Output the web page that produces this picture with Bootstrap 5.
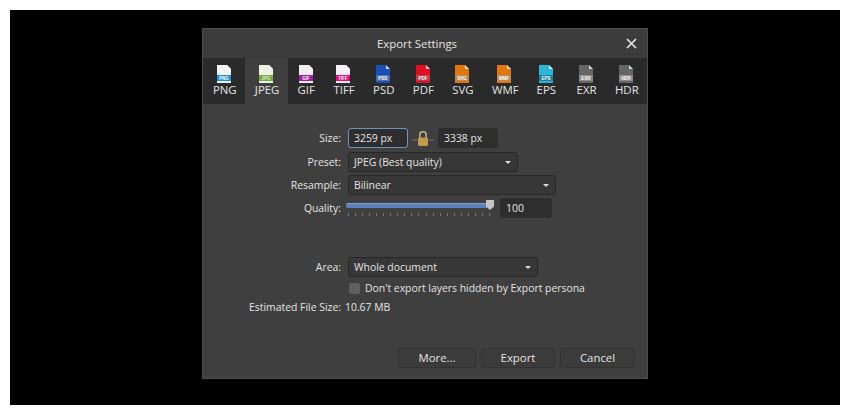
<!DOCTYPE html>
<html lang="en">
<head>
  <meta charset="UTF-8">
  <meta name="viewport" content="width=device-width, initial-scale=1.0">
  <title>Export Settings</title>
  <link href="https://cdn.jsdelivr.net/npm/bootstrap@5.3.0/dist/css/bootstrap.min.css" rel="stylesheet">
  <style>
    html, body { height: 100%; }
    body {
      background-color: #fff;
      padding: 10px;
      font-family: "Open Sans", "Liberation Sans", sans-serif;
      font-size: 10.4px;
      line-height: 1;
      color: #e4e4e4;
    }
    .backdrop {
      width: 830px;
      height: 395px;
      background-color: #000;
      padding: 18px 0 0 192px;
    }
    .export-dialog {
      width: 446px;
      height: 351px;
      background-color: #3f3f3f;
      border: 1px solid #4c4c4c;
    }
    .title-bar {
      height: 29px;
      padding-right: 16px;
      font-size: 11.4px;
      background-color: #3c3c3c;
    }
    .close-x { position: absolute; right: 10px; top: 9px; }
    .format-tabs { height: 46px; background-color: #2a2a2a; }
    .format-tab {
      padding: 7px 9.9px 0;
      min-width: 30px;
      font-size: 11.4px;
    }
    .format-tab svg { display: block; margin: 0 auto 1px; }
    .format-tab.active-tab { background-color: #3f3f3f; }
    .format-tab.gap-before { margin-left: 2px; }
    .doc-label { font-size: 4.5px; font-weight: 700; font-family: "Liberation Sans", sans-serif; }
    .settings-form { padding: 22px 0 0; }
    .field-row { height: 23px; }
    .first-row { margin-bottom: 1px; }
    .field-label { width: 145px; text-align: right; padding: 2px 7px 0 0; flex-shrink: 0; }
    .ui-field {
      height: 20px;
      padding: 2px 5px 0;
      background-color: #373737;
      border: 1px solid #282828;
      border-radius: 3px;
    }
    .ui-field.focused { border-color: #6d93bd; background-color: #2e2e2e; }
    .ui-field.dark { background-color: #2e2e2e; border-color: #2e2e2e; }
    .w-size { width: 60px; }
    .w-preset { width: 170px; }
    .w-resample { width: 208px; }
    .w-area { width: 190px; }
    .w-number { width: 52px; }
    .caret-down {
      width: 0;
      height: 0;
      border-left: 3.5px solid transparent;
      border-right: 3.5px solid transparent;
      border-top: 3.5px solid #ddd;
      margin-right: 1px;
    }
    .lock-box { width: 30px; }
    .q-slider { position: relative; width: 148px; height: 20px; margin-left: -2px; margin-right: 6px; }
    .q-track {
      position: absolute;
      left: 0;
      top: 5px;
      width: 144px;
      height: 5px;
      background-color: #5b82bf;
      border-radius: 2px;
      border-top: 1px solid #7f9dca;
    }
    .q-thumb { position: absolute; left: 140px; top: 2px; }
    .q-ticks { position: absolute; left: 2px; right: 4px; top: 15px; }
    .q-ticks i { display: block; width: 1px; height: 3px; background-color: #777; }
    .area-row { margin-top: 36px; }
    .check-row { margin-top: 1px; height: 18px; padding-left: 146px; }
    .ui-check {
      width: 11px;
      height: 11px;
      margin-right: 5px;
      background-color: #5f5f5f;
      border-radius: 2px;
    }
    .size-row { height: 18px; margin-top: 1px; }
    .size-row .field-label { width: 142px; padding: 0 4px 0 0; }
    .dialog-actions { padding: 0 12px 0 0; margin-top: 32px; gap: 5px; }
    .ui-btn {
      height: 20px;
      font-size: 11.4px;
      color: #e4e4e4;
      background-color: #3b3b3b;
      border: 1px solid #333;
      border-radius: 3px;
    }
    .w-more { width: 78px; }
    .w-export { width: 74px; }
    .w-cancel { width: 75px; }
  </style>
</head>
<body>

  <svg width="0" height="0" class="position-absolute">
    <symbol id="doc" viewBox="0 0 14 18">
      <path d="M0 0H10L14 4V18H0Z" fill="currentColor"/>
      <path d="M10 0L14 4H10Z" fill="#fff" opacity=".75"/>
    </symbol>
  </svg>

  <div class="backdrop">
    <div class="export-dialog d-flex flex-column">

      <!-- Title -->
      <div class="title-bar position-relative d-flex align-items-center justify-content-center">
        Export Settings
        <svg class="close-x" width="11" height="11" viewBox="0 0 11 11"><path d="M1 1L10 10M10 1L1 10" stroke="#e8e8e8" stroke-width="1.6"/></svg>
      </div>

      <!-- Format tabs -->
      <div class="format-tabs d-flex">
        <div class="format-tab text-center">
          <svg width="14" height="18" viewBox="0 0 14 18" style="color:#f2f4f8"><use href="#doc"/><rect y="10" width="14" height="6" fill="#1c8fd8"/><text class="doc-label" x="7" y="15" text-anchor="middle" fill="#fff">PNG</text></svg>
          PNG
        </div>
        <div class="format-tab active-tab text-center">
          <svg width="14" height="18" viewBox="0 0 14 18" style="color:#eef2e6"><use href="#doc"/><rect y="10" width="14" height="6" fill="#76a83a"/><text class="doc-label" x="7" y="15" text-anchor="middle" fill="#dfeccb">JPG</text></svg>
          JPEG
        </div>
        <div class="format-tab text-center">
          <svg width="14" height="18" viewBox="0 0 14 18" style="color:#f3eef3"><use href="#doc"/><rect y="10" width="14" height="6" fill="#a51c9e"/><text class="doc-label" x="7" y="15" text-anchor="middle" fill="#fff">GIF</text></svg>
          GIF
        </div>
        <div class="format-tab text-center">
          <svg width="14" height="18" viewBox="0 0 14 18" style="color:#f6eef2"><use href="#doc"/><rect y="10" width="14" height="6" fill="#e0107a"/><text class="doc-label" x="7" y="15" text-anchor="middle" fill="#fff">TIFF</text></svg>
          TIFF
        </div>
        <div class="format-tab text-center">
          <svg width="14" height="18" viewBox="0 0 14 18" style="color:#1c4fb4"><use href="#doc"/><rect y="10" width="14" height="6" fill="#4b6fae"/><text class="doc-label" x="7" y="15" text-anchor="middle" fill="#fff">PSD</text></svg>
          PSD
        </div>
        <div class="format-tab text-center">
          <svg width="14" height="18" viewBox="0 0 14 18" style="color:#dc0f25"><use href="#doc"/><rect y="10" width="14" height="6" fill="#b3404c"/><text class="doc-label" x="7" y="15" text-anchor="middle" fill="#fff">PDF</text></svg>
          PDF
        </div>
        <div class="format-tab text-center">
          <svg width="14" height="18" viewBox="0 0 14 18" style="color:#e2760f"><use href="#doc"/><rect y="10" width="14" height="6" fill="#b98a55"/><text class="doc-label" x="7" y="15" text-anchor="middle" fill="#fff">SVG</text></svg>
          SVG
        </div>
        <div class="format-tab text-center">
          <svg width="14" height="18" viewBox="0 0 14 18" style="color:#e2760f"><use href="#doc"/><rect y="10" width="14" height="6" fill="#b98a55"/><text class="doc-label" x="7" y="15" text-anchor="middle" fill="#fff">WMF</text></svg>
          WMF
        </div>
        <div class="format-tab text-center">
          <svg width="14" height="18" viewBox="0 0 14 18" style="color:#2bb6d6"><use href="#doc"/><rect y="10" width="14" height="6" fill="#1b7f9c"/><text class="doc-label" x="7" y="15" text-anchor="middle" fill="#fff">EPS</text></svg>
          EPS
        </div>
        <div class="format-tab gap-before text-center">
          <svg width="14" height="18" viewBox="0 0 14 18" style="color:#666"><use href="#doc"/><rect y="10" width="14" height="6" fill="#8c8c8c"/><text class="doc-label" x="7" y="15" text-anchor="middle" fill="#fff">EXR</text></svg>
          EXR
        </div>
        <div class="format-tab text-center">
          <svg width="14" height="18" viewBox="0 0 14 18" style="color:#666"><use href="#doc"/><rect y="10" width="14" height="6" fill="#8c8c8c"/><text class="doc-label" x="7" y="15" text-anchor="middle" fill="#fff">HDR</text></svg>
          HDR
        </div>
      </div>

      <!-- Settings -->
      <div class="settings-form">
        <div class="field-row first-row d-flex align-items-center">
          <div class="field-label">Size:</div>
          <div class="ui-field focused w-size d-flex align-items-center">3259 px</div>
          <div class="lock-box d-flex justify-content-center">
            <svg width="22" height="16" viewBox="0 0 22 16">
              <path d="M0 10H5M17 10H22" stroke="#777"/>
              <path d="M7.8 8V5a3.2 3.2 0 0 1 6.4 0V8" fill="none" stroke="#c8b88a" stroke-width="1.5"/>
              <rect x="6" y="7.5" width="10" height="8.5" rx="1.5" fill="#c49a52"/>
            </svg>
          </div>
          <div class="ui-field dark w-size d-flex align-items-center">3338 px</div>
        </div>
        <div class="field-row d-flex align-items-center">
          <div class="field-label">Preset:</div>
          <div class="ui-field w-preset d-flex align-items-center justify-content-between">JPEG (Best quality)<span class="caret-down"></span></div>
        </div>
        <div class="field-row d-flex align-items-center">
          <div class="field-label">Resample:</div>
          <div class="ui-field w-resample d-flex align-items-center justify-content-between">Bilinear<span class="caret-down"></span></div>
        </div>
        <div class="field-row d-flex align-items-center">
          <div class="field-label">Quality:</div>
          <div class="q-slider">
            <div class="q-track"></div>
            <div class="q-ticks d-flex justify-content-between">
              <i></i><i></i><i></i><i></i><i></i><i></i><i></i><i></i><i></i><i></i><i></i><i></i><i></i><i></i><i></i><i></i><i></i><i></i><i></i><i></i><i></i>
            </div>
            <svg class="q-thumb" width="8" height="10" viewBox="0 0 8 10"><path d="M0 0H8V6.500L4 10L0 6.500Z" fill="#c4c4c4"/></svg>
          </div>
          <div class="ui-field dark w-number d-flex align-items-center">100</div>
        </div>

        <div class="field-row area-row d-flex align-items-center">
          <div class="field-label">Area:</div>
          <div class="ui-field w-area d-flex align-items-center justify-content-between">Whole document<span class="caret-down"></span></div>
        </div>
        <div class="check-row d-flex align-items-center">
          <span class="ui-check"></span>Don't export layers hidden by Export persona
        </div>
        <div class="size-row d-flex align-items-center">
          <div class="field-label">Estimated File Size:</div>
          <div>10.67 MB</div>
        </div>
      </div>

      <!-- Buttons -->
      <div class="dialog-actions d-flex justify-content-end">
        <div class="ui-btn w-more d-flex align-items-center justify-content-center">More...</div>
        <div class="ui-btn w-export d-flex align-items-center justify-content-center">Export</div>
        <div class="ui-btn w-cancel d-flex align-items-center justify-content-center">Cancel</div>
      </div>

    </div>
  </div>

  <script src="https://cdn.jsdelivr.net/npm/bootstrap@5.3.0/dist/js/bootstrap.bundle.min.js"></script>
</body>
</html>
